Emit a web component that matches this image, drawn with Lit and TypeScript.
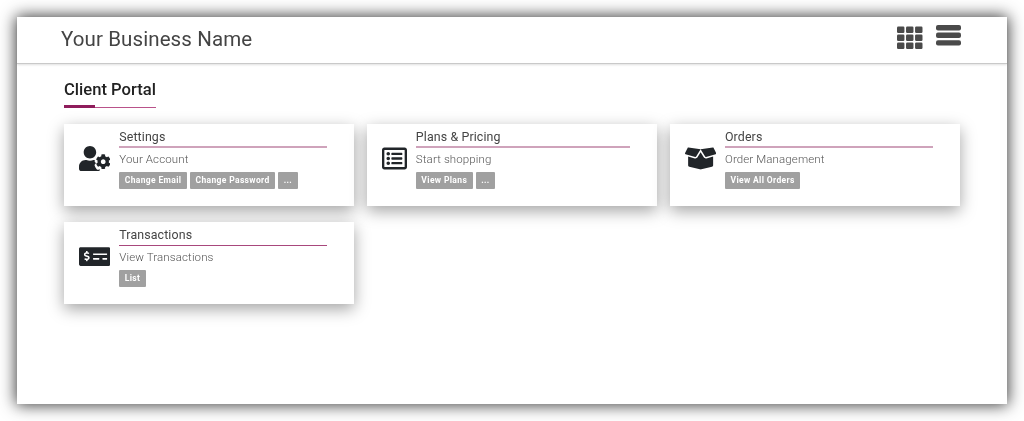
import { LitElement, html, css, svg } from "lit";
import { customElement } from "lit/decorators.js";

const ICONS: Record<string, { vb: string; d: string; w: number }> = {
  user: {
    vb: "0 0 640 512", w: 31.25,
    d: "M610.5 341.3c2.6-14.1 2.6-28.5 0-42.6l25.8-14.9c3-1.7 4.3-5.2 3.3-8.5-6.7-21.6-18.2-41.2-33.2-57.4-2.3-2.5-6-3.1-9-1.4l-25.8 14.9c-10.9-9.3-23.4-16.5-36.9-21.3v-29.8c0-3.4-2.4-6.4-5.7-7.1-22.3-5-45-4.8-66.2 0-3.3.7-5.7 3.7-5.7 7.1v29.8c-13.5 4.8-26 12-36.9 21.3l-25.8-14.9c-2.9-1.7-6.7-1.1-9 1.4-15 16.2-26.5 35.8-33.2 57.4-1 3.3.4 6.8 3.3 8.5l25.8 14.9c-2.6 14.1-2.6 28.5 0 42.6l-25.8 14.9c-3 1.7-4.3 5.2-3.3 8.5 6.7 21.6 18.2 41.1 33.2 57.4 2.3 2.5 6 3.1 9 1.4l25.8-14.9c10.9 9.3 23.4 16.5 36.9 21.3v29.8c0 3.4 2.4 6.4 5.7 7.1 22.3 5 45 4.8 66.2 0 3.3-.7 5.7-3.7 5.7-7.1v-29.8c13.5-4.8 26-12 36.9-21.3l25.8 14.9c2.9 1.7 6.7 1.1 9-1.4 15-16.2 26.5-35.8 33.2-57.4 1-3.3-.4-6.8-3.3-8.5l-25.8-14.9zM496 368.5c-26.8 0-48.5-21.8-48.5-48.5s21.8-48.5 48.5-48.5 48.5 21.8 48.5 48.5-21.7 48.5-48.5 48.5zM224 256c70.7 0 128-57.3 128-128S294.7 0 224 0 96 57.3 96 128s57.3 128 128 128zm201.2 226.5c-2.3-1.2-4.6-2.6-6.8-3.9l-7.9 4.6c-6 3.4-12.8 5.3-19.6 5.3-10.9 0-21.4-4.6-28.9-12.6-18.3-19.8-32.3-43.9-40.2-69.6-5.5-17.7 1.9-36.4 17.9-45.7l7.9-4.6c-.1-2.6-.1-5.2 0-7.8l-7.9-4.6c-16-9.2-23.4-28-17.9-45.7.9-2.9 2.2-5.8 3.2-8.7-3.8-.3-7.5-1.2-11.4-1.2h-16.7c-22.2 10.2-46.9 16-72.9 16s-50.6-5.8-72.9-16h-16.7C60.2 288 0 348.2 0 422.4V464c0 26.5 21.5 48 48 48h352c10.1 0 19.5-3.2 27.2-8.5-1.2-3.8-2-7.7-2-11.8v-9.2z",
  },
  list: {
    vb: "0 0 512 512", w: 25,
    d: "M464 32H48C21.49 32 0 53.49 0 80v352c0 26.51 21.49 48 48 48h416c26.51 0 48-21.49 48-48V80c0-26.51-21.49-48-48-48zm-6 400H54a6 6 0 0 1-6-6V86a6 6 0 0 1 6-6h404a6 6 0 0 1 6 6v340a6 6 0 0 1-6 6zm-42-92v24c0 6.627-5.373 12-12 12H204c-6.627 0-12-5.373-12-12v-24c0-6.627 5.373-12 12-12h200c6.627 0 12 5.373 12 12zm0-96v24c0 6.627-5.373 12-12 12H204c-6.627 0-12-5.373-12-12v-24c0-6.627 5.373-12 12-12h200c6.627 0 12 5.373 12 12zm0-96v24c0 6.627-5.373 12-12 12H204c-6.627 0-12-5.373-12-12v-24c0-6.627 5.373-12 12-12h200c6.627 0 12 5.373 12 12zm-252 12c0 19.882-16.118 36-36 36s-36-16.118-36-36 16.118-36 36-36 36 16.118 36 36zm0 96c0 19.882-16.118 36-36 36s-36-16.118-36-36 16.118-36 36-36 36 16.118 36 36zm0 96c0 19.882-16.118 36-36 36s-36-16.118-36-36 16.118-36 36-36 36 16.118 36 36z",
  },
  box: {
    vb: "0 0 640 512", w: 31.25,
    d: "M425.7 256c-16.9 0-32.8-9-41.4-23.4L320 126l-64.2 106.6c-8.7 14.5-24.6 23.5-41.5 23.5-4.5 0-9-.6-13.3-1.9L64 215v178c0 14.7 10 27.5 24.2 31l216.2 54.1c10.2 2.5 20.9 2.5 31 0L551.8 424c14.2-3.6 24.2-16.4 24.2-31V215l-137 39.1c-4.3 1.3-8.8 1.9-13.3 1.9zm212.6-112.2L586.8 41c-3.1-6.2-9.8-9.8-16.7-8.9L320 64l91.7 152.1c3.8 6.3 11.4 9.3 18.5 7.3l197.9-56.5c9.9-2.9 14.7-13.9 10.2-23.1zM53.2 41L1.7 143.8c-4.6 9.2.3 20.2 10.1 23l197.9 56.5c7.1 2 14.7-1 18.5-7.3L320 64 69.8 32.1c-6.9-.8-13.5 2.7-16.6 8.9z",
  },
  money: {
    vb: "0 0 640 512", w: 31.25,
    d: "M608 64H32C14.33 64 0 78.33 0 96v320c0 17.67 14.33 32 32 32h576c17.67 0 32-14.33 32-32V96c0-17.67-14.33-32-32-32zM176 327.88V344c0 4.42-3.58 8-8 8h-16c-4.42 0-8-3.58-8-8v-16.29c-11.29-.58-22.27-4.52-31.37-11.35-3.9-2.93-4.1-8.77-.57-12.14l11.75-11.21c2.77-2.64 6.89-2.76 10.13-.73 3.87 2.42 8.26 3.72 12.82 3.72h28.11c6.5 0 11.8-5.92 11.8-13.19 0-5.95-3.61-11.19-8.77-12.73l-45-13.5c-18.59-5.58-31.58-23.42-31.58-43.39 0-24.52 19.05-44.44 42.67-45.07V152c0-4.42 3.58-8 8-8h16c4.42 0 8 3.58 8 8v16.29c11.29.58 22.27 4.51 31.37 11.35 3.9 2.93 4.1 8.77.57 12.14l-11.75 11.21c-2.77 2.64-6.89 2.76-10.13.73-3.87-2.43-8.26-3.72-12.82-3.72h-28.11c-6.5 0-11.8 5.92-11.8 13.19 0 5.95 3.61 11.19 8.77 12.73l45 13.5c18.59 5.58 31.58 23.42 31.58 43.39 0 24.53-19.05 44.44-42.67 45.07zM416 312c0 4.42-3.58 8-8 8H296c-4.42 0-8-3.58-8-8v-16c0-4.42 3.58-8 8-8h112c4.42 0 8 3.58 8 8v16zm160 0c0 4.42-3.58 8-8 8h-80c-4.42 0-8-3.58-8-8v-16c0-4.42 3.58-8 8-8h80c4.42 0 8 3.58 8 8v16zm0-96c0 4.42-3.58 8-8 8H296c-4.42 0-8-3.58-8-8v-16c0-4.42 3.58-8 8-8h272c4.42 0 8 3.58 8 8v16z",
  },
};

const CARDS = [
  { icon: "user", title: "Settings", sub: "Your Account", btns: ["Change Email", "Change Password", "..."] },
  { icon: "list", title: "Plans & Pricing", sub: "Start shopping", btns: ["View Plans", "..."] },
  { icon: "box", title: "Orders", sub: "Order Management", btns: ["View All Orders"] },
  { icon: "money", title: "Transactions", sub: "View Transactions", btns: ["List"] },
];

@customElement("app-root")
export class AppRoot extends LitElement {
  static styles = css`
    :host {
      display: block;
      height: 421px;
      padding: 17px;
      box-sizing: border-box;
      background: #fff;
      font-family: Roboto, "Liberation Sans", sans-serif;
      overflow: hidden;
    }
    .window {
      height: 387px;
      background: #fff;
      box-shadow: 0 0 15px 1px rgba(0, 0, 0, 0.78);
      display: flex;
      flex-direction: column;
      filter: blur(0.35px);
    }
    header {
      height: 46px;
      flex: none;
      border-bottom: 1px solid #c9c9c9;
      box-shadow: 0 1px 2px rgba(0, 0, 0, 0.12);
      display: flex;
      align-items: center;
      justify-content: space-between;
      padding: 0 46px 0 44px;
    }
    .brand {
      font-size: 20.5px;
      font-weight: 400;
      color: #444;
      letter-spacing: 0.1px;
      margin-top: -3px;
    }
    .tools {
      display: flex;
      align-items: flex-start;
      gap: 13.5px;
      margin-top: -5px;
    }
    .tools svg {
      display: block;
      fill: #4a4a4a;
    }
    .th { width: 25.5px; height: 25.5px; margin-top: -0.2px; }
    .bars { width: 25px; height: 21px; margin-top: 0.5px; }
    main {
      padding: 16px 47px 0;
    }
    .heading {
      display: inline-block;
    }
    h1 {
      margin: 0;
      font-size: 16.6px;
      font-weight: 500;
      line-height: 20px;
      color: #222;
    }
    .rule {
      display: flex;
      align-items: flex-end;
      height: 3px;
      margin-top: 5px;
    }
    .rule .thick { width: 31px; height: 3px; background: #8f1d5c; }
    .rule .thin { flex: 1; height: 1px; background: #b9528a; }
    .grid {
      display: grid;
      grid-template-columns: repeat(3, 1fr);
      column-gap: 12.6px;
      row-gap: 16px;
      margin-top: 12px;
    }
    .card {
      height: 82px;
      box-sizing: border-box;
      display: flex;
      align-items: flex-start;
      padding: 6px 27.5px 0 15px;
      background: #fff;
      box-shadow: 0 5px 15px rgba(0, 0, 0, 0.36);
    }
    .icon {
      flex: none;
      height: 25px;
      margin: 16px 9px 0 0;
      fill: #212529;
      display: block;
    }
    .body { flex: 1; min-width: 0; }
    h2 {
      margin: 0;
      font-size: 12.4px;
      font-weight: 400;
      line-height: 14px;
      letter-spacing: 0.12px;
      color: #444;
      padding-bottom: 2px;
      border-bottom: 2px solid #cfa3bb;
    }
    .card.last h2 {
      padding-bottom: 3px;
      border-bottom: 1px solid #a8487c;
    }
    p {
      margin: 4px 0 0;
      font-size: 11.5px;
      line-height: 15px;
      font-weight: 300;
      letter-spacing: 0.12px;
      color: #555;
    }
    .btns {
      display: flex;
      gap: 3px;
      margin-top: 5px;
    }
    .btn {
      height: 17px;
      line-height: 17px;
      padding: 0 5.5px;
      background: #a0a0a0;
      color: #fff;
      font-size: 8.5px;
      font-weight: 700;
      letter-spacing: 0.36px;
      border-radius: 1px;
      white-space: nowrap;
    }
  `;

  render() {
    const grid = [0, 1, 2].flatMap((c) =>
      [0, 1, 2].map((r) => svg`<rect x=${c * 181.33} y=${32 + r * 160} width="149.33" height="128" rx="24"></rect>`)
    );
    const bars = [0, 7.6, 15.2].map((y) => svg`<rect x="0" y=${y} width="25" height="5.4" rx="2"></rect>`);
    return html`
      <div class="window">
        <header>
          <div class="brand">Your Business Name</div>
          <div class="tools">
            <svg class="th" viewBox="0 0 512 512">${grid}</svg>
            <svg class="bars" viewBox="0 0 25 21">${bars}</svg>
          </div>
        </header>
        <main>
          <div class="heading">
            <h1>Client Portal</h1>
            <div class="rule"><div class="thick"></div><div class="thin"></div></div>
          </div>
          <div class="grid">
            ${CARDS.map((c, i) => {
              const ic = ICONS[c.icon];
              return html`
                <div class="card ${i === 3 ? "last" : ""}">
                  <svg class="icon" viewBox=${ic.vb} style="width:${ic.w}px"><path d=${ic.d}></path></svg>
                  <div class="body">
                    <h2>${c.title}</h2>
                    <p>${c.sub}</p>
                    <div class="btns">${c.btns.map((b) => html`<div class="btn">${b}</div>`)}</div>
                  </div>
                </div>
              `;
            })}
          </div>
        </main>
      </div>
    `;
  }
}
